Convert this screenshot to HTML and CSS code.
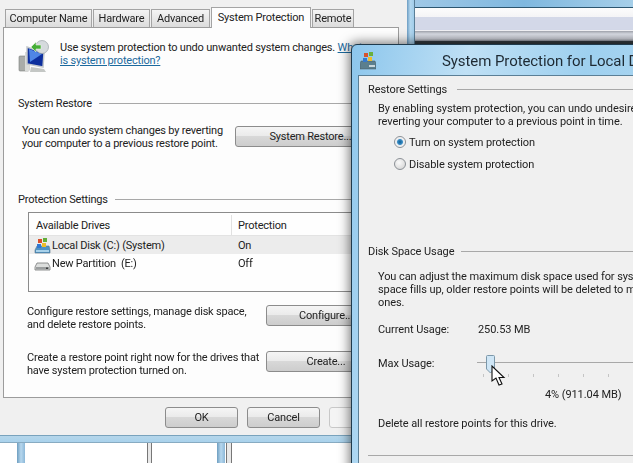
FILE: index.html
```html
<!DOCTYPE html>
<html lang="en">
<head>
<meta charset="utf-8">
<title>System Protection</title>
<link rel="stylesheet" href="styles.css">
</head>
<body>
<div class="desktop">
  <div class="left-col">
    <div class="dialog">
      <div class="tabs">
        <div class="tab t1">Computer Name</div>
        <div class="tab t2">Hardware</div>
        <div class="tab t3">Advanced</div>
        <div class="tab active">System Protection</div>
        <div class="tab t5">Remote</div>
      </div>
      <div class="panel">
        <div class="intro">
          <svg class="big-icon" width="32" height="34" viewBox="0 0 32 34">
            <rect x="1" y="17" width="10" height="15" rx="1" fill="#a9aca9" stroke="#7d807d" stroke-width=".6"/>
            <rect x="7" y="13" width="4" height="19" fill="#d9dbd9"/>
            <path d="M9 8 L26 14 L25 28 L9 25 Z" fill="#0d2f9e" stroke="#c3c8cc" stroke-width="1.5"/>
            <path d="M11 10 L24 15 L12 23 Z" fill="#4f86e6"/>
            <path d="M13 28 L26 30 L28 33 L12 33 Z" fill="#c4c7c5"/>
            <circle cx="24" cy="8" r="6.5" fill="#d5dadd" stroke="#9aa2a8" stroke-width=".7"/>
            <path d="M13 8 L18 3 L18 6 L23 6 L23 10 L18 10 L18 13 Z" fill="#46ae37" stroke="#e7f3e2" stroke-width=".6"/>
          </svg>
          <p class="text intro-text">Use system protection to undo unwanted system changes. <a class="link">What</a><br><a class="link">is system protection?</a></p>
        </div>
        <div class="group-head gh1"><span>System Restore</span><i class="rule"></i></div>
        <div class="action a1">
          <p class="text">You can undo system changes by reverting<br>your computer to a previous restore point.</p>
          <div class="btn btn-restore">System Restore...</div>
        </div>
        <div class="group-head gh2"><span>Protection Settings</span><i class="rule"></i></div>
        <div class="list">
          <div class="list-head"><div class="col-a">Available Drives</div><div class="col-b">Protection</div></div>
          <div class="row selected">
            <div class="col-a">
              <svg class="drive" width="17" height="17" viewBox="0 0 17 17">
                <path d="M1 13 L3 9 L15 9 L16 13 L16 16 L1 16 Z" fill="#4f93c4" stroke="#55738a" stroke-width=".6"/>
                <rect x="2" y="13" width="13" height="2" fill="#a7d1ea"/>
                <rect x="4" y="2" width="4" height="4" fill="#d94f2b"/><rect x="9" y="1" width="4" height="4" fill="#62ad38"/>
                <rect x="3" y="7" width="4" height="4" fill="#2f78d1"/><rect x="8" y="6" width="4" height="4" fill="#eebc2a"/>
              </svg>Local Disk (C:) (System)</div>
            <div class="col-b">On</div>
          </div>
          <div class="row">
            <div class="col-a">
              <svg class="drive" width="17" height="17" viewBox="0 0 17 17">
                <path d="M1 12 L3 8 L14 8 L16 12 L16 15 L1 15 Z" fill="#dcdedd" stroke="#77797a" stroke-width=".8"/>
                <rect x="2" y="12" width="13" height="2.5" fill="#9b9e9f"/>
                <rect x="12" y="12.5" width="2" height="1.5" fill="#3b3d3e"/>
              </svg>New Partition&nbsp; (E:)</div>
            <div class="col-b">Off</div>
          </div>
        </div>
        <div class="action a2">
          <p class="text">Configure restore settings, manage disk space,<br>and delete restore points.</p>
          <div class="btn btn-side">Configure...</div>
        </div>
        <div class="action a3">
          <p class="text">Create a restore point right now for the drives that<br>have system protection turned on.</p>
          <div class="btn btn-side">Create...</div>
        </div>
      </div>
      <div class="dialog-buttons">
        <div class="btn btn-foot">OK</div>
        <div class="btn btn-foot">Cancel</div>
        <div class="btn btn-foot disabled"></div>
      </div>
    </div>
    <div class="blue-band"></div>
    <div class="under">
      <i class="u-blue u1"></i><i class="u-gray u2"></i><i class="u-blue u3"></i><i class="u-gray u4"></i>
    </div>
  </div>
  <div class="side-frame"></div>
  <div class="right-col">
    <div class="b-blue"></div>
    <div class="b-white"></div>
    <div class="b-lav"></div>
    <div class="b-grad"></div>
    <div class="b-dark"></div>
  </div>

  <section class="front">
    <div class="titlebar">
      <svg class="title-icon" width="16" height="18" viewBox="0 0 16 18">
        <path d="M0 12 L1 9 L15 9 L16 12 L16 17 L0 17 Z" fill="#5b7f8e" stroke="#46565e" stroke-width=".5"/>
        <rect x="9" y="13" width="6" height="2" fill="#c7d5da"/>
        <rect x="4" y="1" width="4" height="4" fill="#d6532c"/><rect x="9" y="0" width="4" height="4" fill="#6ab03c"/>
        <rect x="3" y="6" width="4" height="4" fill="#3479cf"/><rect x="8" y="5" width="4" height="4" fill="#edbd2c"/>
      </svg>
      <div class="title">System Protection for Local Disk (C:)</div>
    </div>
    <div class="content">
      <div class="group-head fg1"><span>Restore Settings</span><i class="rule"></i></div>
      <p class="text indent fp1">By enabling system protection, you can undo undesired changes by<br>reverting your computer to a previous point in time.</p>
      <div class="radio-row r1"><i class="radio on"></i>Turn on system protection</div>
      <div class="radio-row r2"><i class="radio"></i>Disable system protection</div>
      <div class="group-head fg2"><span>Disk Space Usage</span><i class="rule"></i></div>
      <p class="text indent fp2">You can adjust the maximum disk space used for system protection. As<br>space fills up, older restore points will be deleted to make room for new<br>ones.</p>
      <div class="usage"><span class="lbl">Current Usage:</span><span>250.53 MB</span></div>
      <div class="usage u-max"><span class="lbl">Max Usage:</span>
        <div class="slider">
          <div class="track"></div>
          <div class="ticks"><i></i><i></i><i></i><i></i><i></i><i></i></div>
          <svg class="thumb" width="11" height="19" viewBox="0 0 11 19"><path d="M1.5 1.5 Q1.5 .5 2.5 .5 L8.5 .5 Q9.5 .5 9.5 1.5 L9.5 14 L5.5 18 L1.5 14 Z" fill="#cfe6f6" stroke="#7c98aa"/></svg>
          <svg class="cursor" width="16" height="22" viewBox="0 0 16 22"><path d="M1 1 L1 16 L5 13 L8 20 L11 19 L8 12.500 L13 12.500 Z" fill="#fff" stroke="#111" stroke-width="1.100"/></svg>
        </div>
      </div>
      <div class="pct">4% (911.04 MB)</div>
      <p class="text indent del">Delete all restore points for this drive.</p>
      <div class="bottom-rule"></div>
    </div>
  </section>
</div>
</body>
</html>
```

FILE: styles.css
```css
* { box-sizing: border-box; }
html, body { margin: 0; padding: 0; }
body { width: 633px; height: 463px; overflow: hidden; background: #fff; font-family: "Roboto", "Open Sans", sans-serif; font-size: 11px; color: #222; }
p { margin: 0; }
i { display: block; }
.desktop { position: relative; width: 633px; height: 463px; overflow: hidden; display: flex; filter: blur(.3px); }
.left-col { width: 407px; flex: none; display: flex; flex-direction: column; }
.dialog { height: 435px; flex: none; background: #f0f0f0; padding-top: 7px; display: flex; flex-direction: column; letter-spacing: -.2px; }
.tabs { height: 20px; padding-left: 5px; display: flex; align-items: flex-end; flex: none; }
.tab { height: 18px; margin-right: 1px; border: 1px solid #a4a4a4; border-bottom: 0; background: linear-gradient(#f4f4f4, #dcdcdc); display: flex; align-items: center; justify-content: center; white-space: nowrap; position: relative; }
.t1 { width: 87px; } .t2 { width: 57px; } .t3 { width: 59px; } .t5 { width: 42px; }
.tab.active { width: 100px; height: 21px; background: #fdfdfd; margin-bottom: -1px; z-index: 1; padding-bottom: 2px; }
.panel { margin-left: 3px; width: 396px; height: 371px; background: #fdfdfd; border: 1px solid #9c9c9c; padding: 11px 0 0 14px; flex: none; }
.intro { display: flex; height: 34px; }
.big-icon { flex: none; }
.intro-text { margin: 2px 0 0 10px; white-space: nowrap; }
.text { line-height: 13px; white-space: nowrap; }
.link { color: #1c6a9e; text-decoration: underline; }
.group-head { height: 14px; display: flex; align-items: center; white-space: nowrap; }
.rule { flex: 1; height: 1px; background: #a8a8a8; margin-left: 7px; }
.gh1 { margin-top: 23px; }
.gh2 { margin-top: 42px; }
.action { display: flex; justify-content: space-between; padding-left: 8px; padding-right: 12px; }
.a1 { margin-top: 14px; padding-left: 4px; height: 26px; }
.a2 { margin-top: 13px; padding-left: 9px; }
.a3 { margin-top: 20px; padding-left: 9px; }
.btn { height: 21px; border: 1px solid #8c8c8c; border-radius: 3px; background: linear-gradient(#f5f5f5 0, #ebebeb 45%, #d8d8d8 50%, #cdcdcd 100%); display: flex; align-items: center; justify-content: center; white-space: nowrap; flex: none; }
.btn-restore { width: 151px; margin-top: 2px; }
.btn-side { width: 120px; height: 21px; }
.btn-foot { width: 73px; height: 21px; }
.btn.disabled { border-color: #c8c8c8; background: #f4f4f4; }
.list { margin: 6px 0 0 10px; width: 358px; height: 80px; border: 1px solid #8b8b8b; background: #fefefe; }
.list-head { height: 23px; display: flex; align-items: center; border-bottom: 1px solid #e3e3e3; padding-top: 2px; }
.list-head .col-a { padding-left: 7px; border-right: 1px solid #e1e1e1; height: 100%; display: flex; align-items: center; }
.list-head .col-b { padding-left: 6px; }
.col-a { width: 203px; flex: none; display: flex; align-items: center; white-space: nowrap; }
.col-b { padding-left: 6px; }
.row { height: 18px; display: flex; align-items: center; }
.row .col-a { padding-left: 5px; }
.row.selected { background: #ececec; }
.drive { margin-right: 1px; flex: none; }
.dialog-buttons { display: flex; margin-top: 9px; padding-left: 165px; gap: 9px; }
.blue-band { height: 8px; flex: none; background: linear-gradient(#4e7f9d 0, #b5d6ea 15%, #a9d2ec 85%, #6f8fa3 100%); }
.under { flex: 1; position: relative; display: flex; background: #fff; padding-left: 17px; }
.u-blue { width: 8px; background: linear-gradient(90deg, #6e9ec0, #b6d7ee, #8cb8d8); }
.u-gray { border-left: 1px solid #777; border-right: 1px solid #777; background: #e8e8e8; }
.u2 { width: 5px; margin-left: 122px; }
.u3 { margin-left: 65px; }
.u4 { width: 6px; margin-left: 1px; }
.side-frame { width: 8px; flex: none; background: linear-gradient(90deg, #6b9cc2, #b3d7ef 40%, #a2cdea 85%, #26465c); }
.right-col { flex: 1; display: flex; flex-direction: column; }
.b-blue { background: linear-gradient(90deg, #9fc8e6, #7fb8df 50%, #a6cfe9); border-bottom: 1px solid #2c5670; height: 8px; }
.b-white { height: 9px; background: linear-gradient(#fcfcfc, #f4f4f6); }
.b-lav { height: 14px; background: #d3d8e8; border-bottom: 1px solid #f0f0f4; }
.b-grad { height: 10px; background: linear-gradient(#9ea2ac, #d9dce4 30%, #c6c9d2 80%, #888b94); }
.b-dark { height: 3px; background: #333a40; }
.front { position: absolute; left: 351px; top: 44px; width: 320px; height: 440px; background: #9fcfee; border: 1px solid #1f3a4c; border-radius: 6px 6px 0 0; box-shadow: 0 0 11px 2px rgba(0,0,0,.5); padding: 0 0 0 6px; background-image: linear-gradient(100deg, #8cc6ec, #bfe0f5 30%, #9ed0ef 60%, #b6daf2); letter-spacing: -.08px; }
.titlebar { height: 30px; display: flex; align-items: center; position: relative; }
.title-icon { margin-left: 2px; margin-top: 1px; flex: none; }
.title { margin-left: 66px; font-size: 15px; white-space: nowrap; color: #1e2a33; padding-top: 1px; }
.content { height: 400px; background: #f0f0f0; border: 1px solid #5b7f96; border-right: 0; padding: 6px 0 0 9px; }
.group-head span { display: block; }
.fg1 .rule { margin-left: 10px; }
.indent { padding-left: 10px; }
.fp1 { margin-top: 6px; }
.radio-row { display: flex; align-items: center; height: 14px; padding-left: 26px; white-space: nowrap; }
.radio { width: 12px; height: 12px; border-radius: 50%; margin-right: 3px; flex: none; border: 1px solid #8b9096; background: radial-gradient(circle at 40% 35%, #fafafa, #d0d0d0); }
.radio.on { background: radial-gradient(circle closest-side, #0f5f95 0, #3a8cc4 50%, #e6eaee 68%, #f6f6f6 100%); }
.r1 { margin-top: 7px; }
.r2 { margin-top: 8px; }
.fg2 { margin-top: 73px; }
.fp2 { margin-top: 12px; }
.usage { display: flex; height: 14px; align-items: center; padding-left: 10px; margin-top: 13px; white-space: nowrap; }
.lbl { width: 100px; flex: none; }
.u-max { margin-top: 20px; position: relative; }
.slider { position: relative; flex: 1; height: 14px; }
.track { position: absolute; left: -1px; right: 0; top: 6px; height: 1px; background: #a8a8a8; }
.ticks { position: absolute; left: 5px; top: 18px; display: flex; gap: 24px; }
.ticks i { width: 1px; height: 3px; background: #c4c4c4; }
.thumb { position: absolute; left: 7px; top: -1px; }
.cursor { position: absolute; left: 13px; top: 9px; }
.pct { margin-top: 17px; padding-left: 177px; height: 14px; white-space: nowrap; display: flex; align-items: center; }
.del { margin-top: 16px; }
.bottom-rule { height: 1px; background: #a8a8a8; margin-top: 25px; }
```
